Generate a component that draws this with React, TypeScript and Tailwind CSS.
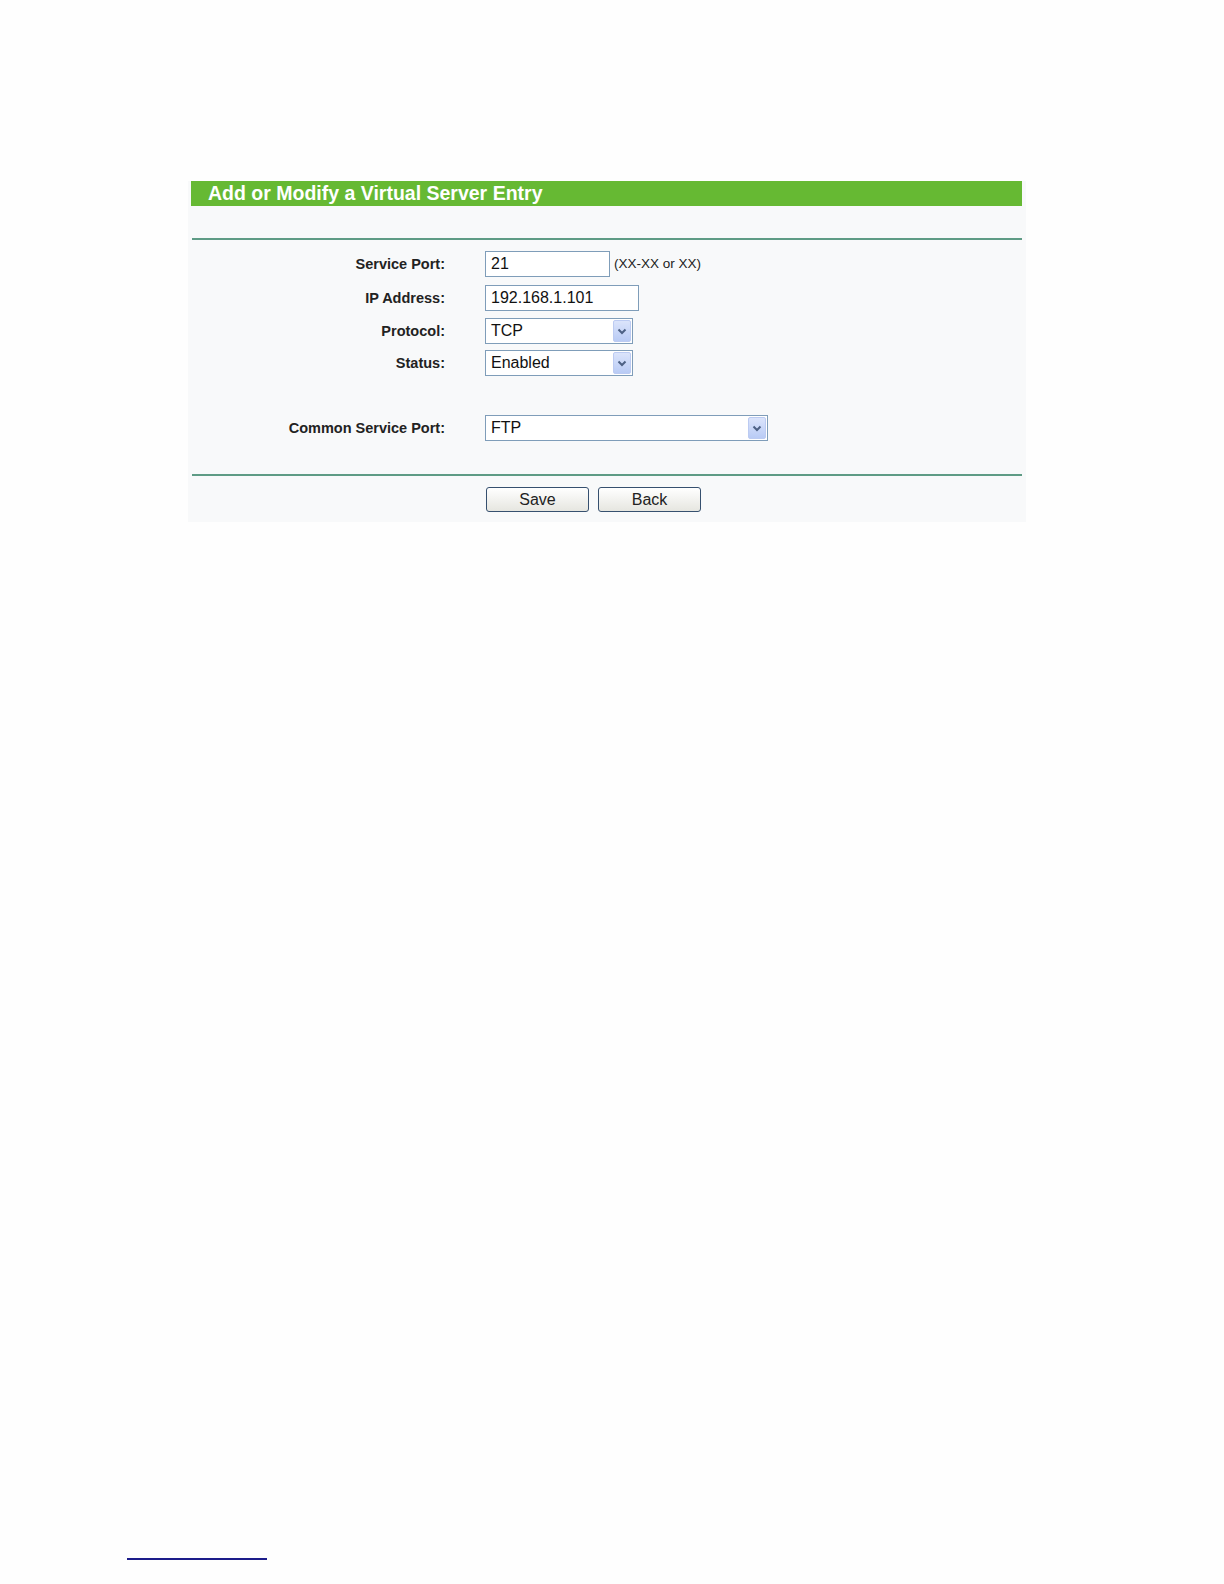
import React from "react";

const font = { fontFamily: '"Liberation Sans", Arial, sans-serif' };

function Label({ children }: { children: React.ReactNode }) {
  return (
    <div className="w-[257px] shrink-0 text-right text-[14.5px] font-bold leading-none text-[#222]">
      {children}
    </div>
  );
}

function TextBox({ value, width }: { value: string; width: string }) {
  return (
    <div
      className={`${width} flex h-[26px] items-center border border-[#7f9db9] bg-white px-[5px] text-[16px] leading-none text-[#111]`}
    >
      {value}
    </div>
  );
}

function SelectBox({ value, width }: { value: string; width: string }) {
  return (
    <div
      className={`${width} flex h-[26px] items-center justify-between border border-[#7f9db9] bg-white pl-[5px] pr-[1px] text-[16px] leading-none text-[#111]`}
    >
      <span>{value}</span>
      <div className="flex h-[22px] w-[18px] items-center justify-center rounded-[2px] border border-[#bccbf2] bg-gradient-to-b from-[#dbe4fb] to-[#b9cbf5]">
        <svg width="10" height="7" viewBox="0 0 10 7">
          <path d="M1.5 1.5 L5 5 L8.5 1.5" fill="none" stroke="#4d6185" strokeWidth="2" />
        </svg>
      </div>
    </div>
  );
}

function Button({ children }: { children: React.ReactNode }) {
  return (
    <div className="flex h-[25px] w-[103px] items-center justify-center rounded-[3px] border border-[#36506f] bg-gradient-to-b from-[#ffffff] to-[#e6e6e0] text-[16px] leading-none text-[#222]">
      {children}
    </div>
  );
}

export default function App() {
  return (
    <div className="h-[1584px] overflow-hidden bg-[#fefefe]" style={font}>
      <div className="h-[181px]" />
      <div className="ml-[188px] w-[838px] bg-[#f8f9fa] pb-[10px]">
        <div className="ml-[3px] flex h-[25px] w-[831px] items-center bg-[#66b933] pl-[17px] text-[19.5px] font-bold leading-none text-white">
          Add or Modify a Virtual Server Entry
        </div>
        <div className="ml-[4px] mt-[32px] h-[2px] w-[830px] bg-[#5e9b85]" />

        <div className="mt-[11px] flex flex-col">
          <div className="flex h-[26px] items-center">
            <Label>Service Port:</Label>
            <div className="ml-[40px] flex items-center">
              <TextBox value="21" width="w-[125px]" />
              <span className="ml-[4px] text-[13.5px] leading-none text-[#222]">(XX-XX or XX)</span>
            </div>
          </div>
          <div className="mt-[8px] flex h-[26px] items-center">
            <Label>IP Address:</Label>
            <div className="ml-[40px]">
              <TextBox value="192.168.1.101" width="w-[154px]" />
            </div>
          </div>
          <div className="mt-[7px] flex h-[26px] items-center">
            <Label>Protocol:</Label>
            <div className="ml-[40px]">
              <SelectBox value="TCP" width="w-[148px]" />
            </div>
          </div>
          <div className="mt-[6px] flex h-[26px] items-center">
            <Label>Status:</Label>
            <div className="ml-[40px]">
              <SelectBox value="Enabled" width="w-[148px]" />
            </div>
          </div>
          <div className="mt-[39px] flex h-[26px] items-center">
            <Label>Common Service Port:</Label>
            <div className="ml-[40px]">
              <SelectBox value="FTP" width="w-[283px]" />
            </div>
          </div>
        </div>

        <div className="ml-[4px] mt-[33px] h-[2px] w-[830px] bg-[#5e9b85]" />
        <div className="mt-[11px] flex gap-[9px] pl-[298px]">
          <Button>Save</Button>
          <Button>Back</Button>
        </div>
      </div>

      <div className="ml-[127px] mt-[1036px] h-[2px] w-[140px] bg-[#1c1c8a]" />
    </div>
  );
}
